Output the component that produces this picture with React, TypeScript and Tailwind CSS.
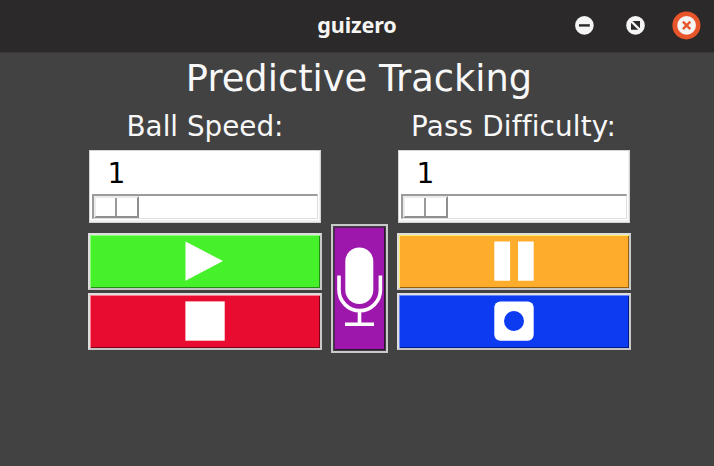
import type { ReactNode } from "react";

function TitleBar() {
  return (
    <header className="relative flex h-[53px] items-start justify-center border-b border-[#3a3838] bg-[#2b2929]">
      <span className="font-['Noto_Sans',sans-serif] text-[21.6px] leading-[50px] font-bold tracking-[-0.15px] text-[#f6f5f4]">
        guizero
      </span>
      <div className="absolute top-[11px] right-[14px] flex items-center gap-[23px]">
        <svg width="28" height="28" viewBox="0 0 28 28">
          <circle cx="14.4" cy="14.4" r="9.3" fill="#f5f5f5" />
          <path d="M9 14.4h10.8" stroke="#2b2929" strokeWidth="2.4" />
        </svg>
        <svg width="28" height="28" viewBox="0 0 28 28">
          <circle cx="14.5" cy="14.4" r="9.3" fill="#f5f5f5" />
          <path d="M11.6 10.1h7.4v7.2zM10 11.8v7h7.2z" fill="#2b2929" />
        </svg>
        <svg className="overflow-visible" width="28" height="28" viewBox="0 0 28 28">
          <circle cx="14.4" cy="14.4" r="14" fill="#e9552b" />
          <circle cx="14.6" cy="14.4" r="9.3" fill="#f5f5f5" />
          <path d="M10.9 10.7l7.4 7.4M18.3 10.7l-7.4 7.4" stroke="#e9552b" strokeWidth="2.4" />
        </svg>
      </div>
    </header>
  );
}

function Scale() {
  return (
    <div className="mx-px h-[73px] border border-[#d4d4d4] bg-white px-[2px] shadow-[inset_0_-2px_0_#f0f0f0,inset_-1px_0_0_#f0f0f0]">
      <div className="h-[43px] pl-[15.5px] text-[28px] leading-[45px] text-black">1</div>
      <div className="flex h-[25px] border-t-2 border-r border-b border-l-2 border-t-[#9b9b9b] border-r-[#dedede] border-b-[#dedede] border-l-[#9b9b9b]">
        <div className="flex h-[22px] w-[45px] border-2 border-t-[#ececec] border-r-[#8f8f8f] border-b-[#8f8f8f] border-l-[#ececec]">
          <div className="w-[21px] border-r-2 border-[#999]" />
        </div>
      </div>
    </div>
  );
}

function PadButton({ label, tone, children }: { label: string; tone: string; children: ReactNode }) {
  return (
    <button
      aria-label={label}
      className={`flex h-[57px] w-full items-center justify-center border-2 border-t-[#dedede] border-r-[#c9c9c9] border-b-[#c4c4c4] border-l-[#dedede] pb-px ${tone}`}
    >
      <svg width="40" height="40" viewBox="0 0 40 40" fill="white">
        {children}
      </svg>
    </button>
  );
}

export default function App() {
  return (
    <div className="h-[466px] w-[714px] overflow-hidden bg-[#424242] font-['DejaVu_Sans',sans-serif] text-[#f8f8f8] [font-variant-ligatures:none]">
      <TitleBar />
      <h1 className="h-[53px] pl-1 text-center text-[36.8px] leading-[52px]">Predictive Tracking</h1>
      <main className="grid grid-cols-[234px_57px_234px] gap-x-[9px] pl-[88px]">
        <section>
          <h2 className="h-[44px] text-center text-[27.8px] leading-[42px]">Ball Speed:</h2>
          <Scale />
          <div className="mt-[10px] flex flex-col gap-[3px]">
            <PadButton label="Play" tone="bg-[#46f02a] shadow-[inset_1px_1px_0_#8cff79,inset_-1px_-1px_0_#238d16]">
              <path d="M.5.6L38 20 .5 39.7z" />
            </PadButton>
            <PadButton label="Stop" tone="bg-[#e80c30] shadow-[inset_1px_1px_0_#ff7b8e,inset_-1px_-1px_0_#830018]">
              <rect x=".4" y=".4" width="39.3" height="39.3" />
            </PadButton>
          </div>
        </section>
        <button
          aria-label="Microphone"
          className="mt-[118px] h-[129px] border-2 border-[#c9c9c9] bg-[#9e17ad] shadow-[inset_0_0_0_1px_#424242,inset_2px_2px_0_#53205a,inset_-2px_-2px_0_#2d1430]"
        >
          <svg width="53" height="125" viewBox="333 226 53 125" fill="none" stroke="white">
            <rect x="345.3" y="247.5" width="28" height="56.5" rx="14" fill="white" stroke="none" />
            <path d="M339 275.5V290a20.7 20.7 0 0 0 41.4 0V275.5M359.5 311v13M345 324.3h29" strokeWidth="3.6" />
          </svg>
        </button>
        <section>
          <h2 className="h-[44px] pr-px text-center text-[27.8px] leading-[42px] tracking-[0.18px]">Pass Difficulty:</h2>
          <Scale />
          <div className="mt-[10px] flex flex-col gap-[3px]">
            <PadButton label="Pause" tone="bg-[#fdac2b] shadow-[inset_1px_1px_0_#ffec65,inset_-1px_-1px_0_#93600f]">
              <path d="M.3.5h15.8v39.2H.3zM24 .5h15.7v39.2H24z" />
            </PadButton>
            <PadButton label="Record" tone="bg-[#0d3bf2] shadow-[inset_1px_1px_0_#6685ff,inset_-1px_-1px_0_#001a85]">
              <rect x=".3" y=".4" width="39.4" height="39.3" rx="6" />
              <circle cx="20" cy="20" r="10" fill="#0d3bf2" />
            </PadButton>
          </div>
        </section>
      </main>
    </div>
  );
}
